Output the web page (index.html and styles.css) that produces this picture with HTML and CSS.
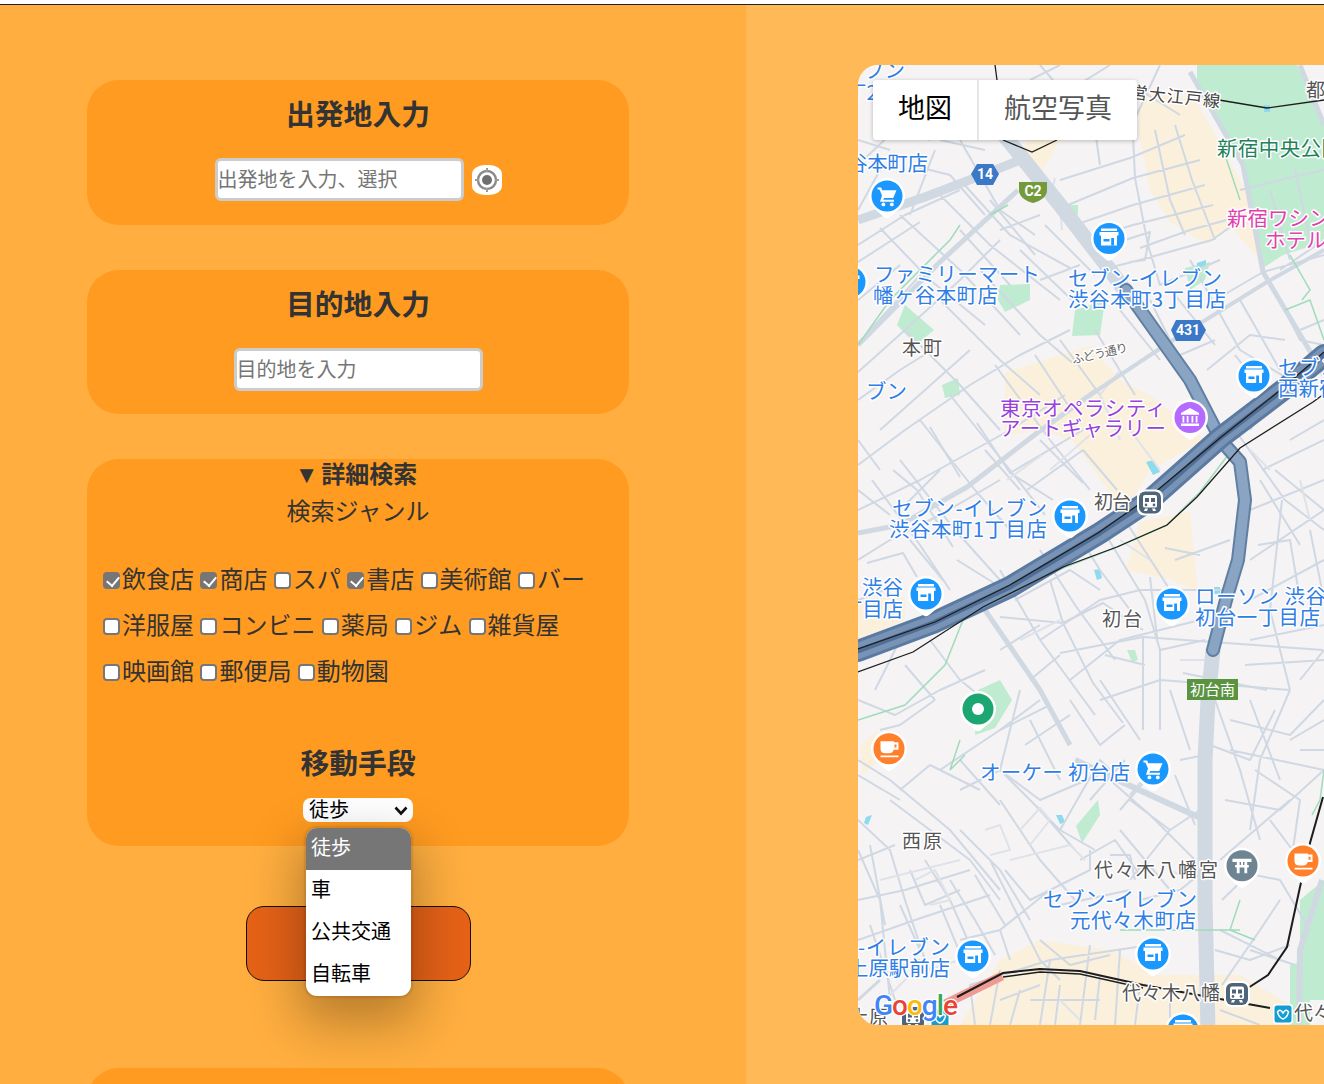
FILE: index.html
```html
<!DOCTYPE html>
<html lang="ja">
<head>
<meta charset="utf-8">
<title>検索</title>
<link rel="stylesheet" href="styles.css">
</head>
<body>
<div class="topbar"></div>
<div class="layout">
  <section class="panel">
    <div class="card card-origin">
      <h2 class="card-title">出発地入力</h2>
      <div class="input-row">
        <input class="place-input" type="text" placeholder="出発地を入力、選択">
        <button class="locate" aria-label="現在地">
          <svg width="30" height="30" viewBox="0 0 30 30"><circle cx="15" cy="15" r="9" fill="none" stroke="#8a8a8a" stroke-width="2.4"/><circle cx="15" cy="15" r="5" fill="#6f6f6f"/><path d="M15 3v4M15 23v4M3 15h4M23 15h4" stroke="#9a9a9a" stroke-width="2"/></svg>
        </button>
      </div>
    </div>
    <div class="card card-dest">
      <h2 class="card-title">目的地入力</h2>
      <div class="input-row">
        <input class="place-input" type="text" placeholder="目的地を入力">
      </div>
    </div>
    <div class="card card-detail">
      <div class="summary">▼ 詳細検索</div>
      <div class="genre-title">検索ジャンル</div>
      <div class="genres">
        <label class="genre"><input type="checkbox" checked>飲食店</label>
        <label class="genre"><input type="checkbox" checked>商店</label>
        <label class="genre"><input type="checkbox">スパ</label>
        <label class="genre"><input type="checkbox" checked>書店</label>
        <label class="genre"><input type="checkbox">美術館</label>
        <label class="genre"><input type="checkbox">バー</label>
        <label class="genre"><input type="checkbox">洋服屋</label>
        <label class="genre"><input type="checkbox">コンビニ</label>
        <label class="genre"><input type="checkbox">薬局</label>
        <label class="genre"><input type="checkbox">ジム</label>
        <label class="genre"><input type="checkbox">雑貨屋</label>
        <label class="genre"><input type="checkbox">映画館</label>
        <label class="genre"><input type="checkbox">郵便局</label>
        <label class="genre"><input type="checkbox">動物園</label>
      </div>
      <h2 class="card-title move-title">移動手段</h2>
      <div class="select-wrap">
        <select class="move-select">
          <option>徒歩</option>
          <option>車</option>
          <option>公共交通</option>
          <option>自転車</option>
        </select>
        <svg class="select-arrow" width="14" height="10" viewBox="0 0 14 10"><path d="M1.500 1.500 7 7.500 12.500 1.500" fill="none" stroke="#111" stroke-width="2.600"/></svg>
      </div>
      <div class="move-popup">
        <div class="move-option is-selected">徒歩</div>
        <div class="move-option">車</div>
        <div class="move-option">公共交通</div>
        <div class="move-option">自転車</div>
      </div>
    </div>
    <button class="search-btn" aria-label="検索"></button>
    <div class="card card-next"></div>
  </section>
  <section class="map-area">
    <div class="map">
      <svg class="map-svg" width="560" height="960" viewBox="858 65 560 960">
        <defs>
          <path id="pin-shape" d="M-12.500 13A18 18 0 1 1 12.500 13L3 21Q0 23.500 -3 21Z" fill="#fff"/>
          <g id="pin-shop"><use href="#pin-shape"/><circle r="15.500" fill="#1A98FF"/><path fill="#fff" d="M-8-10H8V-7.500H-8zM-9.500-6.500H9.500V-3H8V7H-8V-3H-9.500z"/><path fill="#1A98FF" d="M-5.500.5H.5V3H-5.500zM2.200-.5H5V7H2.200z"/></g>
          <g id="pin-cart"><use href="#pin-shape"/><circle r="15.500" fill="#1A98FF"/><path fill="#fff" d="M-9.500-8.500H-5.800L-4.800-5.800H9.500L6.200 2H-2.800L-3.800 3.800H7V5.800H-7L-5-.5-7.500-6.600H-9.500z"/><circle cx="-3.600" cy="8.400" r="1.900" fill="#fff"/><circle cx="4.800" cy="8.400" r="1.900" fill="#fff"/></g>
          <g id="pin-cafe"><use href="#pin-shape"/><circle r="15.500" fill="#FF7F2A"/><path fill="#fff" fill-rule="evenodd" d="M-8.500-7.500H5V-6.500H9.500V1H4.800Q3.500 4.500 0 4.500H-3.500Q-8.500 4.500-8.500 0zM5.500-4.300V-1.200H7.500V-4.300zM-8.500 6.800H9.500V8.600H-8.500z"/></g>
          <g id="pin-shrine"><use href="#pin-shape"/><circle r="15.500" fill="#6E8493"/><path fill="#fff" d="M-9.500-7H9.500V-3.700H-9.500zM-6.800-.8H6.800V1.700H-6.800zM-5.200-3.700H-2.400V7.500H-5.200zM2.400-3.700H5.200V7.500H2.400zM-1-3.700H1V-.8H-1z"/></g>
          <g id="pin-museum"><use href="#pin-shape"/><circle r="15.500" fill="#B56BFF"/><path fill="#fff" d="M0-9.500 9-4.500V-2.800H-9V-4.500zM-7.500-1.500H-5.700V5H-7.500zM-3.300-1.500H-1.500V5H-3.300zM1.500-1.500H3.300V5H1.500zM5.700-1.500H7.500V5H5.700zM-9 6H9V8.500H-9z"/></g>
          <g id="pin-park"><use href="#pin-shape"/><circle r="15.500" fill="#1BA672"/><circle r="6" fill="#fff"/></g>
          <g id="station"><rect x="-13" y="-13" width="26" height="26" rx="7" fill="#fff"/><rect x="-11" y="-11" width="22" height="22" rx="6" fill="#4F6579"/><path fill="#fff" d="M-7-5.500Q-7-7.500-5-7.500H5Q7-7.500 7-5.500V3.500Q7 5 5 5H-5Q-7 5-7 3.500z"/><path fill="#4F6579" d="M-5-4.500H-1V-.5H-5zM1-4.500H5V-.5H1z"/><circle cx="-4" cy="2.400" r="1.300" fill="#4F6579"/><circle cx="4" cy="2.400" r="1.300" fill="#4F6579"/><path d="M-5 6H-2L-3 8.500H-6zM5 6H2L3 8.500H6z" fill="#fff"/></g>
          <g id="metro"><rect x="-10" y="-10" width="20" height="20" rx="3" fill="#fff"/><rect x="-8.500" y="-8.500" width="17" height="17" rx="2.500" fill="#149DD3"/><path d="M-5.500-2Q-3-6 0-1 3-6 5.500-2 4 4 0 5-4 4-5.500-2Z" fill="none" stroke="#fff" stroke-width="1.500"/></g>
        </defs>

        <rect class="m-ground" x="858" y="65" width="560" height="960"/>

        <!-- land use -->
        <g class="m-beige">
          <path d="M1140 90 1196 100 1248 195 1262 262 1232 228 1206 244 1170 222 1150 190 1138 130Z"/>
          <path d="M1005 372 1090 346 1120 380 1150 395 1205 440 1150 470 1124 512 1072 440 1040 430 1004 436Z"/>
          <path d="M1140 522 1190 512 1198 592 1172 580 1126 570Z"/>
          <path d="M1030 130 1060 140 1040 175 1020 160Z"/>
          <path d="M860 745 878 730 880 760 862 775Z"/>
          <path d="M960 1025 1000 960 1040 940 1110 950 1160 975 1240 975 1290 1005 1290 1025Z"/>
          <path d="M858 598 905 598 905 620 858 640Z"/>
        </g>
        <g class="m-park">
          <path d="M1197 65H1297L1324 122V242L1283 255 1263 268 1243 165 1197 88Z"/>
          <path d="M905 305 934 330 916 345 897 325Z"/>
          <path d="M1000 285 1030 284 1030 300 1005 312 998 300Z"/>
          <path d="M1075 310 1105 300 1100 335 1072 336Z"/>
          <path d="M1060 205 1078 205 1078 215 1060 218Z"/>
          <path d="M1185 268 1210 262 1205 280 1190 290Z"/>
          <path d="M978 690 1000 680 1012 700 995 728 975 735Z"/>
          <path d="M1098 800 1100 815 1082 843 1076 826Z"/>
          <path d="M1127 650 1135 650 1138 660 1132 662Z"/>
          <path d="M1300 900 1324 880V1000H1300Z"/>
          <path d="M1290 965 1310 960 1310 1025 1290 1025Z"/>
          <path d="M942 385 958 378 960 395 945 398Z"/>
        </g>
        <g class="m-water">
          <path d="M1146 462 1154 460 1160 472 1153 475Z"/>
          <path d="M1094 570 1100 569 1102 578 1097 580Z"/>
          <path d="M1214 587 1220 587 1220 594 1214 594Z"/>
          <path d="M1056 815 1062 815 1065 822 1060 824Z"/>
          <path d="M866 817 872 815 868 825 864 823Z"/>
          <path d="M1197 263 1206 260 1206 266 1197 269Z"/>
          <path d="M1264 105 1270 105 1270 112 1264 112Z"/>
        </g>

        <!-- minor roads -->
        <path class="m-minor" d="M858 245 905 215 960 190M858 262 920 222M880 228 930 280 985 325M900 215 960 270 1020 335M935 190 990 245 1060 300M960 180 1010 235 1070 268M858 300 900 265M870 330 925 270M858 372 905 330 960 280 1000 240M905 330 960 385 1000 430M940 300 1000 360 1040 395M980 270 1040 335 1075 365M1020 250 1072 300M858 400 900 370 940 345M880 430 925 390 970 350M858 465 905 430 970 385 1020 355 1070 330M920 420 975 490 1010 530M950 395 1010 470 1045 515M995 365 1050 440 1090 490M858 510 920 480 1010 430 1065 395M872 480 920 545 950 590M900 460 955 530 1000 580M858 560 890 540 940 515 1000 480M858 600 885 590M1000 570 1040 640 1095 715M1040 550 1075 605 1115 660M1075 530 1100 570 1130 610M1100 525 1145 600 1160 650 1160 730M1125 520 1170 590M1015 600 1070 570 1100 590M1040 640 1100 600 1140 590 1230 590M1070 680 1120 640 1200 620M1100 700 1160 680 1290 690M1160 650 1205 640M1235 430 1285 500 1324 530M1250 560 1324 510M1250 510 1324 480M1262 470 1324 440M1290 440 1324 420M1282 500 1270 610 1290 690M1310 530 1324 600M1250 640 1324 625M1245 665 1324 660M1290 690 1260 760 1250 830M1230 720 1290 735 1324 700M1230 750 1324 770M1255 770 1300 800 1290 870M1215 700 1240 770 1260 840M1230 870 1280 880 1310 930M1220 930 1280 960M1222 985 1260 930 1280 900M975 1025 970 985 1050 960 1150 945M1050 960 1040 1025M1090 945 1080 1025M1120 950 1115 1025M1000 970 990 1025M1030 1000 1100 1000M1140 900 1180 890 1205 870M1130 880 1170 830 1200 810M1170 830 1130 800M1090 850 1090 870 1050 890 1000 930 960 940M1050 890 1030 900 1005 870M1000 930 1010 960M990 860 1010 900 1040 960 1060 980M960 830 1000 870 1030 920M890 800 930 830 970 860 1000 900M858 820 890 850 905 900 925 960M858 860 895 845M858 900 905 890 970 870M858 940 915 920 990 895M950 880 975 920 995 955M925 860 950 900 970 945M900 905 920 950M960 790 1000 770 1060 830 1095 850M1000 770 1040 800 1110 770M940 770 1000 730 1040 700M1020 690 1000 770M1060 830 1100 760 1110 770M1130 795 1160 760M1110 780 1150 815 1195 860M858 760 890 780 950 830 1000 890M935 700 900 725 880 730M1110 855 1130 855 1135 880M1300 750 1324 750M1300 680 1324 650M1095 130 1100 165M1060 180 1130 158 1185 135M1068 205 1133 178 1200 160M1075 225 1133 205 1205 185M1100 235 1133 225 1213 205M1133 135 1135 178 1148 245M1155 130 1170 200 1185 235M1175 125 1192 180 1215 240M1140 90 1180 115M1140 248 1190 230 1245 215M1148 245 1160 285 1220 260M1100 270 1140 260 1212 240 1240 220M1125 240 1150 232 1145 260 1130 262M1190 260 1240 350 1290 380M1215 300 1263 272M1207 370 1250 335 1285 340M1240 300 1280 370M1280 270 1324 240M1263 272 1324 255M1240 190 1280 180 1324 170M1270 190 1290 260M1295 170 1310 240M1300 330 1324 320M1070 90 1110 65M1030 80 1060 65M1125 140 1160 65M960 140 1000 210 1035 235M858 140 890 150M935 150 910 215M1050 120 1100 95 1130 90"/>
        <path class="m-minor" d="M930 427 960 477M893 470 917 490 953 547M977 423 1010 473 1053 500M1010 473 1083 430M1027 490 1083 450M1083 450 1117 490M1040 440 1083 483M867 563 903 553 917 577M957 560 1010 593M910 540 943 580M1000 617 1063 623 1103 603 1143 630M1050 580 1063 623 1093 683 1123 723M1150 577 1157 637M1060 653 1143 637 1323 650M1143 637 1143 730M1183 673 1267 690M1250 600 1324 560M1175 560 1230 540M1165 548 1200 555M1260 480 1300 545M1275 470 1324 510M1258 545 1290 540 1300 600M1000 730 1050 705M1030 720 1060 780M1070 700 1100 745 1125 725M1105 655 1145 665M1100 680 1140 740M1170 690 1190 750M1180 760 1205 755M1090 800 1125 760M1120 810 1150 775M1210 745 1250 760 1275 710M1250 700 1280 780M1290 740 1324 720M1225 800 1280 810 1324 770M1220 860 1290 800M1270 820 1300 860M1222 900 1258 865M1250 950 1295 965M858 700 895 715 940 690 985 670M875 690 900 640M930 640 960 680 985 700M905 665 935 700M1000 650 1040 625M1030 680 1060 655M1025 745 1070 715M858 775 900 800M900 790 930 765 980 790M960 760 1000 805M858 850 880 900 890 1000M870 845 885 925M910 870 925 905 960 890M940 905 965 965M975 875 1005 925M870 925 895 1000M890 970 920 960M1000 1000 1040 985M1010 1025 1020 990M1060 985 1055 1025M1100 975 1095 1020M1140 985 1135 1025M1170 985 1170 1025M1040 940 1070 965 1110 955M1060 905 1130 890M1080 860 1115 840 1140 875M1195 825 1175 775M1000 800 1040 860 1075 900M1040 810 1075 850M1120 830 1170 890M1215 950 1250 960 1290 945M1220 1010 1260 1025M858 165 895 130 930 140M858 210 880 170M910 165 950 175 985 215M940 140 985 150M1000 230 1040 215M1040 280 1080 265M960 230 1010 285M990 200 1035 255M1045 225 1095 275M858 440 880 470M858 490 890 515M940 470 905 505M985 450 1020 490M1060 340 1100 395M1035 355 1068 405M1095 330 1135 395M1120 310 1160 360M1150 300 1190 380M1175 295 1215 345M1215 340 1180 355M1235 355 1270 400 1250 430M1280 300 1300 340 1324 345M1040 130 1070 100 1040 65"/>
        <path class="m-minor m-thin" d="M1055 178 1050 198 1045 190M1060 205 1062 230M1120 370 1100 395 1120 440M1130 430 1160 470M1007 480 1042 455M1050 470 1090 435M1120 540 1150 560M1180 660 1210 660M1020 640 1060 620M1250 450 1270 470M1300 480 1310 520M985 830 1000 825 1010 850 990 855M1020 830 1040 808 1050 820 1030 845M880 880 960 860M915 880 935 870 950 900 930 905M1170 870 1190 880M1010 860 1070 845 1085 860M1060 1000 1080 1020M885 1000 910 975 960 960"/>

        <!-- arterial roads -->
        <g class="m-road">
          <path class="w9" d="M858 220 925 197 985 174 1020 160"/>
          <path class="w5" d="M858 345 940 262 1018 190"/>
          <path class="w5" d="M1190 72 1243 165 1263 272 1324 375"/>
          <path class="w4" d="M1090 395 1170 342 1267 282 1324 250"/>
          <path class="w5" d="M858 533 900 525 967 487 1037 433 1097 390"/>
          <path class="w5" d="M1300 65 1324 125"/>
          <path class="w5" d="M985 610 1040 690 1070 745"/>
          <path class="w6" d="M1075 760 1150 795 1205 820"/>
          <path class="w3" d="M858 1000 880 980"/>
          <path class="w16" d="M1000 130 1060 205 1110 270 1126 292"/>
          <path class="w16" d="M1213 650 1208 700 1205 760 1205 900 1208 1030"/>
          <path class="w6" d="M1299 1025 1300 950 1322 880"/>
        </g>
        <path class="m-green-line" d="M858 720 905 705 945 665 965 615 1063 568 1117 547 1167 525 1200 492 1228 455M1008 205 990 215M858 345 890 300 950 240 960 225M1225 155 1240 200M1290 255 1310 290 1302 300M1285 310 1310 300 1324 340M1324 770 1320 800 1312 815M1120 930 1240 930M1240 900 1230 930 1255 940M960 740 950 770 965 755"/>

        <!-- elevated highway -->
        <g class="m-highway">
          <path class="hw-case" d="M1126 290 1190 380 1222 442"/>
          <path class="hw-fill" d="M1126 290 1190 380 1222 442"/>
          <path class="hw-case" d="M1225 445 1240 462 1245 500 1238 560 1226 600 1213 650"/>
          <path class="hw-fill" d="M1225 445 1240 462 1245 500 1238 560 1226 600 1213 650"/>
          <path class="hw-main" d="M858 651 933 623 1010 587 1100 533 1150 500 1220 438 1283 390 1324 355"/>
          <path class="hw-lane" d="M858 651 933 623 1010 587 1100 533 1150 500 1220 438 1283 390 1324 355"/>
          <path class="hw-mid" d="M858 651 933 623 1010 587 1100 533 1150 500 1220 438 1283 390 1324 355"/>
        </g>
        <path class="m-train" d="M858 649 935 622 1010 585 1098 533 1148 498 1220 438 1283 388 1324 352"/>

        <!-- rail -->
        <path class="m-pink" d="M945 1004 1002 976"/>
        <path class="m-train" d="M858 672 913 652 983 607 1063 567 1117 547 1167 525 1197 497 1240 448 1313 402 1324 394"/>
        <path class="m-train" d="M995 65 997 80M1003 140 1032 152 1057 140M1219 100 1267 108 1324 100"/>
        <path class="m-train w2" d="M1323 797 1310 843 1300 887 1287 947 1268 975 1248 988"/>
        <path class="m-train w2" d="M957 997 1003 973 1040 969 1080 971 1143 985 1220 999 1270 1008"/>
        <path class="m-train" d="M1003 977 1040 972 1080 974 1143 988"/>

        <!-- shields -->
        <path fill="#3B78C8" d="M977 164H993L999 174 993 185H977L971 174Z"/>
        <text class="shield" x="985" y="179">14</text>
        <path fill="#739A3B" d="M1019 182H1047V190Q1047 199 1033 203 1019 199 1019 190Z"/>
        <text class="shield" x="1033" y="196">C2</text>
        <path fill="#3B78C8" d="M1176 320H1200L1206 330 1200 341H1176L1171 330Z"/>
        <text class="shield" x="1188" y="335">431</text>
        <rect x="1187" y="679" width="51" height="21" fill="#5B9440"/>
        <text class="exit" x="1212.500" y="695">初台南</text>

        <!-- labels -->
        <text class="poi" x="864" y="78">ブン</text>
        <text class="poi" x="846" y="100">丁2</text>
        <text class="poi" x="847" y="171" textLength="81">谷本町店</text>
        <text class="poi" x="874" y="282" textLength="166">ファミリーマート</text>
        <text class="poi" x="873" y="303" textLength="125">幡ヶ谷本町店</text>
        <text class="poi" x="1068" y="286" textLength="154">セブン-イレブン</text>
        <text class="poi" x="1068" y="307" textLength="158">渋谷本町3丁目店</text>
        <text class="poi" x="1278" y="375" textLength="154">セブン-イレブン</text>
        <text class="poi" x="1278" y="396">西新宿</text>
        <text class="poi" x="866" y="399">ブン</text>
        <text class="poi" x="892" y="516" textLength="155">セブン-イレブン</text>
        <text class="poi" x="889" y="537" textLength="158">渋谷本町1丁目店</text>
        <text class="poi" x="862" y="595" textLength="41">渋谷</text>
        <text class="poi" x="842" y="617" textLength="61">丁目店</text>
        <text class="poi" x="1195" y="604" textLength="131">ローソン 渋谷</text>
        <text class="poi" x="1195" y="625" textLength="125">初台一丁目店</text>
        <text class="poi" x="980" y="780" textLength="150">オーケー 初台店</text>
        <text class="poi" x="1043" y="907" textLength="154">セブン-イレブン</text>
        <text class="poi" x="1070" y="928" textLength="126">元代々木町店</text>
        <text class="poi" x="858" y="955" textLength="92">-イレブン</text>
        <text class="poi" x="848" y="976" textLength="102">上原駅前店</text>
        <text class="park" x="1217" y="156" textLength="125">新宿中央公園</text>
        <text class="hotel" x="1227" y="226">新宿ワシントン</text>
        <text class="hotel" x="1265" y="248">ホテル</text>
        <text class="museum" x="1000" y="416" textLength="166">東京オペラシティ</text>
        <text class="museum" x="1000" y="436" textLength="166">アートギャラリー</text>
        <text class="area" x="902" y="355" textLength="40">本町</text>
        <text class="area" x="1102" y="626" textLength="40">初台</text>
        <text class="area" x="902" y="848" textLength="40">西原</text>
        <text class="area" x="1094" y="509" textLength="37">初台</text>
        <text class="area" x="1094" y="877" textLength="124">代々木八幡宮</text>
        <text class="area" x="1122" y="1000" textLength="98">代々木八幡</text>
        <text class="area" x="1306" y="97">都</text>
        <text class="area" x="1294" y="1020">代々</text>
        <text class="area" x="850" y="1024">上原</text>
        <text class="rail-name" transform="translate(1130 98) rotate(6)" textLength="90">営大江戸線</text>
        <text class="street" transform="translate(1073 364) rotate(-13)" textLength="57">ふどう通り</text>

        <!-- pins -->
        <use href="#pin-cart" x="887" y="196"/>
        <use href="#pin-shop" x="1109" y="238.500"/>
        <use href="#pin-shop" x="1254" y="376"/>
        <use href="#pin-shop" x="1070" y="516"/>
        <use href="#pin-shop" x="926" y="594"/>
        <use href="#pin-shop" x="1172" y="604"/>
        <use href="#pin-shop" x="973" y="956"/>
        <use href="#pin-shop" x="1153" y="954"/>
        <use href="#pin-shop" x="1183" y="1030"/>
        <use href="#pin-shop" x="850" y="282"/>
        <use href="#pin-cart" x="1153" y="769"/>
        <use href="#pin-museum" x="1190" y="417.500"/>
        <use href="#pin-park" x="978" y="709"/>
        <use href="#pin-cafe" x="889" y="748.700"/>
        <use href="#pin-cafe" x="1303" y="861"/>
        <use href="#pin-shrine" x="1242" y="865.700"/>
        <use href="#station" x="1150" y="502.500"/>
        <use href="#station" x="1237" y="994"/>
        <use href="#station" x="913" y="1018"/>
        <use href="#metro" x="1283" y="1014"/>
        <use href="#metro" x="940" y="1018"/>

        <text class="g-logo" x="874" y="1015"><tspan fill="#4285F4">G</tspan><tspan fill="#EA4335">o</tspan><tspan fill="#FBBC05">o</tspan><tspan fill="#4285F4">g</tspan><tspan fill="#34A853">l</tspan><tspan fill="#EA4335">e</tspan></text>
      </svg>
      <div class="map-type">
        <div class="map-type-btn is-active">地図</div>
        <div class="map-type-btn">航空写真</div>
      </div>
    </div>
  </section>
</div>
</body>
</html>
```

FILE: styles.css
```css
* { box-sizing: border-box; }
html, body { height: 100%; }
body {
  margin: 0;
  background: #fff;
  overflow: hidden;
  font-family: "Liberation Sans", "Noto Sans CJK JP", sans-serif;
  color: #333;
}
.topbar { height: 5px; border-bottom: 1px solid #222; }
.layout { display: flex; height: 1079px; overflow: hidden; }

.panel {
  flex: 0 0 746px;
  padding: 75px 117px 0 87px;
  background: #FFAE3F;
  text-align: center;
}
.card {
  position: relative;
  margin-bottom: 45px;
  padding: 15px 0 24px;
  border-radius: 32px;
  background: #FF9B20;
}
.card-dest { padding-bottom: 23px; }
.card-title {
  margin: 0;
  font-size: 28.8px;
  line-height: 40px;
  font-weight: 700;
}
.input-row {
  display: flex;
  justify-content: center;
  align-items: center;
  gap: 8px;
  margin-top: 23px;
}
.place-input {
  width: 249px;
  height: 43px;
  padding: 2px 0 0;
  border: 3px solid #ccc;
  border-radius: 6px;
  background: #fff;
  font: 20px "Liberation Sans", "Noto Sans CJK JP", sans-serif;
}
.place-input::placeholder { color: #757575; }
.locate {
  display: block;
  width: 30px;
  height: 30px;
  padding: 0;
  border: 0;
  border-radius: 42% / 32%;
  background: #fff;
}
.locate svg { display: block; }

.card-detail { height: 387px; padding: 0; margin-bottom: 60px; }
.summary {
  padding-right: 4px;
  font-size: 24px;
  line-height: 32px;
  font-weight: 700;
  word-spacing: -4px;
}
.genre-title { margin-top: 3px; font-size: 24px; line-height: 36px; }
.genres {
  display: flex;
  flex-wrap: wrap;
  column-gap: 6.400px;
  margin-top: 27px;
  padding: 0 16px;
  font-size: 24px;
  line-height: 46px;
  text-align: left;
}
.genre {
  display: flex;
  align-items: center;
  white-space: nowrap;
}
.genre input {
  position: relative;
  width: 17px;
  height: 17px;
  margin: 0 2px 0 0;
  appearance: none;
  border: 2px solid #767676;
  border-radius: 4px;
  background: #fff;
}
.genre input:checked { background: #767676; }
.genre input:checked::after {
  content: "";
  position: absolute;
  left: 3.500px;
  top: 0;
  width: 6px;
  height: 10px;
  border: solid #fff;
  border-width: 0 2.500px 2.500px 0;
  transform: rotate(40deg);
}
.move-title { margin-top: 49px; }
.select-wrap {
  position: relative;
  width: 110px;
  height: 24px;
  margin: 14px auto 0;
}
.move-select {
  display: block;
  width: 110px;
  height: 24px;
  padding: 0 0 0 6px;
  border: 0;
  border-radius: 8px;
  appearance: none;
  background: #fff;
  color: #000;
  font: 20px "Liberation Sans", "Noto Sans CJK JP", sans-serif;
}
.select-arrow {
  position: absolute;
  right: 5px;
  top: 8px;
  pointer-events: none;
}
.move-popup {
  position: absolute;
  left: 219px;
  top: 369px;
  z-index: 2;
  width: 105px;
  border-radius: 11px;
  overflow: hidden;
  background: #fff;
  box-shadow: 0 0 2px 2px rgba(0, 0, 0, .1), 0 20px 50px 8px rgba(0, 0, 0, .27);
}
.move-option {
  height: 42px;
  padding-left: 5px;
  color: #000;
  font-size: 20px;
  line-height: 40px;
  text-align: left;
}
.move-option.is-selected { background: #767676; color: #fff; }

.search-btn {
  display: block;
  width: 225px;
  height: 75px;
  margin: 0 0 87px 159px;
  padding: 0;
  border: 1px solid #111;
  border-radius: 18px;
  background: #E56217;
}
.card-next { height: 120px; }

.map-area {
  flex: 1;
  min-width: 0;
  overflow: hidden;
  padding: 60px 0 0 112px;
  background: #FFB957;
}
.map {
  position: relative;
  width: 560px;
  height: 960px;
  border-radius: 20px;
  overflow: hidden;
}
.map-svg { display: block; }
.map-type {
  position: absolute;
  left: 15px;
  top: 15px;
  display: flex;
  border-radius: 3px;
  background: #fff;
  box-shadow: 0 1px 4px rgba(0, 0, 0, .25);
}
.map-type-btn {
  height: 60px;
  padding: 0 25px;
  color: #565656;
  font: 27px/58px "Roboto", "Noto Sans CJK JP", sans-serif;
}
.map-type-btn.is-active { padding: 0 25px; border-right: 2px solid #e6e6e6; color: #000; }

.m-ground { fill: #F5F3F4; }
.m-beige path { fill: #FAF0DC; }
.m-park path { fill: #BFEBD0; }
.m-water path { fill: #8EDAEE; }
.m-minor { fill: none; stroke: #CFD8E3; stroke-width: 2; stroke-linejoin: round; }
.m-thin { stroke: #DFE3E9; }
.m-road path { fill: none; stroke: #D0D9E2; stroke-linejoin: round; }
.m-road .w3 { stroke-width: 3; }
.m-road .w4 { stroke-width: 4; }
.m-road .w5 { stroke-width: 5; }
.m-road .w6 { stroke-width: 6; }
.m-road .w9 { stroke-width: 9; }
.m-road .w16 { stroke-width: 15; }
.m-green-line { fill: none; stroke: #9FDCBB; stroke-width: 1.500; }
.m-highway path { fill: none; stroke-linejoin: round; stroke-linecap: round; }
.hw-case { stroke: #5F7FA3; stroke-width: 14; }
.hw-fill { stroke: #8AA5C3; stroke-width: 10; }
.hw-main { stroke: #5A7AA2; stroke-width: 22; }
.hw-lane { stroke: #7893B5; stroke-width: 16; }
.hw-mid { stroke: #4F6F96; stroke-width: 5; }
.m-train { fill: none; stroke: #1D1D1D; stroke-width: 1.300; }
.m-train.w2 { stroke-width: 2; }
.m-pink { fill: none; stroke: #F09A96; stroke-width: 9; }

.map-svg text {
  font-family: "Noto Sans CJK JP", sans-serif;
  paint-order: stroke;
  stroke: #fff;
  stroke-width: 3px;
  stroke-linejoin: round;
}
.map-svg .poi { fill: #2F7EE6; font-size: 20.500px; }
.map-svg .park { fill: #23815A; font-size: 20.500px; }
.map-svg .hotel { fill: #E23FAE; font-size: 20.500px; }
.map-svg .museum { fill: #9A3FDC; font-size: 20.500px; }
.map-svg .area { fill: #555; font-size: 19px; }
.map-svg .rail-name { fill: #444; font-size: 17px; }
.map-svg .street { fill: #666; font-size: 12px; }
.map-svg .shield { fill: #fff; stroke: none; font: 700 14px "Roboto", sans-serif; text-anchor: middle; }
.map-svg .exit { fill: #fff; stroke: none; font-size: 15px; text-anchor: middle; }
.map-svg .g-logo { font: 500 28px "Roboto", sans-serif; letter-spacing: -1px; stroke-width: 2.500px; }
```
